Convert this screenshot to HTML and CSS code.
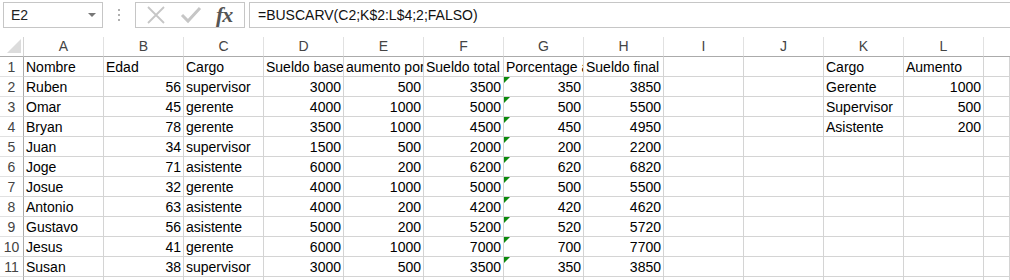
FILE: index.html
```html
<!DOCTYPE html>
<html>
<head>
<meta charset="utf-8">
<link rel="stylesheet" href="styles.css">
</head>
<body>
<div class="toolbar">
  <div class="namebox"><span class="ref">E2</span><span class="caret"></span></div>
  <div class="dots"><i></i><i></i><i></i></div>
  <div class="btns">
    <svg class="ic" width="22" height="22" viewBox="0 0 22 22"><path d="M3 3 L19 19 M19 3 L3 19" stroke="#c6c6c6" stroke-width="1.8" fill="none"/></svg>
    <svg class="ic" width="24" height="22" viewBox="0 0 24 22"><path d="M3 11 L9 17 L21 4" stroke="#c6c6c6" stroke-width="3" fill="none"/></svg>
    <span class="fx">fx</span>
  </div>
  <div class="formula">=BUSCARV(C2;K$2:L$4;2;FALSO)</div>
</div>
<div class="sheet">
  <div class="corner"><span class="tri"></span></div>
  <div class="ch">A</div><div class="ch">B</div><div class="ch">C</div><div class="ch">D</div><div class="ch">E</div><div class="ch">F</div><div class="ch">G</div><div class="ch">H</div><div class="ch">I</div><div class="ch">J</div><div class="ch">K</div><div class="ch">L</div><div class="ch last"></div>

  <div class="rh">1</div><div class="c">Nombre</div><div class="c">Edad</div><div class="c">Cargo</div><div class="c ov">Sueldo base</div><div class="c ov">aumento por</div><div class="c ov">Sueldo total</div><div class="c ov">Porcentage a</div><div class="c ov">Sueldo final</div><div class="c"></div><div class="c"></div><div class="c">Cargo</div><div class="c">Aumento</div><div class="c"></div>

  <div class="rh">2</div><div class="c">Ruben</div><div class="c n">56</div><div class="c">supervisor</div><div class="c n">3000</div><div class="c n">500</div><div class="c n">3500</div><div class="c n g">350</div><div class="c n">3850</div><div class="c"></div><div class="c"></div><div class="c">Gerente</div><div class="c n">1000</div><div class="c"></div>

  <div class="rh">3</div><div class="c">Omar</div><div class="c n">45</div><div class="c">gerente</div><div class="c n">4000</div><div class="c n">1000</div><div class="c n">5000</div><div class="c n g">500</div><div class="c n">5500</div><div class="c"></div><div class="c"></div><div class="c">Supervisor</div><div class="c n">500</div><div class="c"></div>

  <div class="rh">4</div><div class="c">Bryan</div><div class="c n">78</div><div class="c">gerente</div><div class="c n">3500</div><div class="c n">1000</div><div class="c n">4500</div><div class="c n g">450</div><div class="c n">4950</div><div class="c"></div><div class="c"></div><div class="c">Asistente</div><div class="c n">200</div><div class="c"></div>

  <div class="rh">5</div><div class="c">Juan</div><div class="c n">34</div><div class="c">supervisor</div><div class="c n">1500</div><div class="c n">500</div><div class="c n">2000</div><div class="c n g">200</div><div class="c n">2200</div><div class="c"></div><div class="c"></div><div class="c"></div><div class="c"></div><div class="c"></div>

  <div class="rh">6</div><div class="c">Joge</div><div class="c n">71</div><div class="c">asistente</div><div class="c n">6000</div><div class="c n">200</div><div class="c n">6200</div><div class="c n g">620</div><div class="c n">6820</div><div class="c"></div><div class="c"></div><div class="c"></div><div class="c"></div><div class="c"></div>

  <div class="rh">7</div><div class="c">Josue</div><div class="c n">32</div><div class="c">gerente</div><div class="c n">4000</div><div class="c n">1000</div><div class="c n">5000</div><div class="c n g">500</div><div class="c n">5500</div><div class="c"></div><div class="c"></div><div class="c"></div><div class="c"></div><div class="c"></div>

  <div class="rh">8</div><div class="c">Antonio</div><div class="c n">63</div><div class="c">asistente</div><div class="c n">4000</div><div class="c n">200</div><div class="c n">4200</div><div class="c n g">420</div><div class="c n">4620</div><div class="c"></div><div class="c"></div><div class="c"></div><div class="c"></div><div class="c"></div>

  <div class="rh">9</div><div class="c">Gustavo</div><div class="c n">56</div><div class="c">asistente</div><div class="c n">5000</div><div class="c n">200</div><div class="c n">5200</div><div class="c n g">520</div><div class="c n">5720</div><div class="c"></div><div class="c"></div><div class="c"></div><div class="c"></div><div class="c"></div>

  <div class="rh">10</div><div class="c">Jesus</div><div class="c n">41</div><div class="c">gerente</div><div class="c n">6000</div><div class="c n">1000</div><div class="c n">7000</div><div class="c n g">700</div><div class="c n">7700</div><div class="c"></div><div class="c"></div><div class="c"></div><div class="c"></div><div class="c"></div>

  <div class="rh">11</div><div class="c">Susan</div><div class="c n">38</div><div class="c">supervisor</div><div class="c n">3000</div><div class="c n">500</div><div class="c n">3500</div><div class="c n g">350</div><div class="c n">3850</div><div class="c"></div><div class="c"></div><div class="c"></div><div class="c"></div><div class="c"></div>

  <div class="rh"></div><div class="c"></div><div class="c"></div><div class="c"></div><div class="c"></div><div class="c"></div><div class="c"></div><div class="c"></div><div class="c"></div><div class="c"></div><div class="c"></div><div class="c"></div><div class="c"></div><div class="c"></div>
</div>
</body>
</html>
```

FILE: styles.css
```css
html, body {
  margin: 0;
  padding: 0;
  background: #fff;
  overflow: hidden;
}
body {
  font-family: "Liberation Sans", Arial, sans-serif;
  font-size: 14px;
  color: #000;
}
.toolbar {
  display: flex;
  align-items: stretch;
  height: 26px;
  margin-top: 2px;
  padding-left: 3px;
}
.namebox {
  width: 100px;
  border: 1px solid #c6c6c6;
  display: flex;
  align-items: center;
  justify-content: space-between;
  padding: 0 6px 0 7px;
  box-sizing: border-box;
}
.ref { font-size: 14px; color: #222; }
.caret {
  width: 0; height: 0;
  border-left: 4px solid transparent;
  border-right: 4px solid transparent;
  border-top: 4px solid #777;
}
.dots {
  width: 32px;
  display: flex;
  flex-direction: column;
  align-items: center;
  justify-content: center;
  gap: 3px;
}
.dots i {
  display: block;
  width: 2px; height: 2px;
  background: #b0b0b0;
}
.btns {
  width: 110px;
  border: 1px solid #c6c6c6;
  box-sizing: border-box;
  display: flex;
  align-items: center;
  padding-left: 9px;
  gap: 12px;
}
.ic { display: block; }
.fx {
  font-family: "Liberation Serif", "DejaVu Serif", serif;
  font-style: italic;
  font-weight: bold;
  font-size: 22px;
  color: #555;
  margin-left: 1px;
  letter-spacing: -1px;
  line-height: 24px;
}
.formula {
  flex: 1;
  margin-left: 4px;
  border: 1px solid #c6c6c6;
  border-right: none;
  padding-left: 8px;
  display: flex;
  align-items: center;
  font-size: 14px;
  color: #111;
}
.sheet {
  margin-top: 9px;
  display: grid;
  grid-template-columns: 24px repeat(12, 80px) 26px;
  grid-auto-rows: 20px;
}
.sheet > div {
  box-sizing: border-box;
  white-space: nowrap;
  overflow: hidden;
}
.corner {
  border-right: 1px solid #d4d4d4;
  border-bottom: 1px solid #ababab;
  position: relative;
}
.tri {
  position: absolute;
  right: 2px;
  bottom: 3px;
  width: 0; height: 0;
  border-left: 14px solid transparent;
  border-bottom: 14px solid #dcdcdc;
}
.ch {
  border-right: 1px solid #e1e1e1;
  border-bottom: 1px solid #ababab;
  text-align: center;
  line-height: 19px;
  color: #444;
  font-size: 14px;
}
.ch.last { border-right: none; }
.rh {
  border-right: 1px solid #ababab;
  border-bottom: 1px solid #e1e1e1;
  text-align: center;
  line-height: 20px;
  color: #444;
  font-size: 14px;
}
.c {
  border-right: 1px solid #d4d4d4;
  border-bottom: 1px solid #d4d4d4;
  line-height: 20px;
  padding: 0 2px 0 2px;
  font-size: 14px;
  position: relative;
}
.n { text-align: right; }
.g::before {
  content: "";
  position: absolute;
  left: 0;
  top: 0;
  width: 0; height: 0;
  border-top: 6px solid #0b8a0b;
  border-right: 6px solid transparent;
}
```
